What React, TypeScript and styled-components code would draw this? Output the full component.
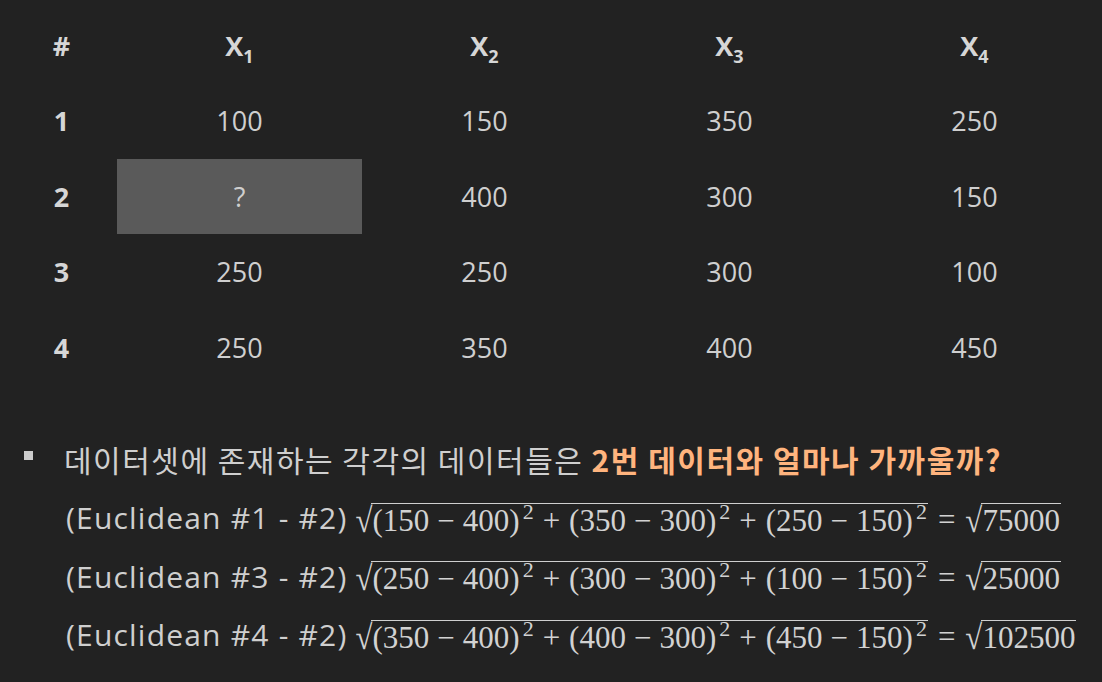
import styled, { createGlobalStyle } from 'styled-components'

const GlobalStyle = createGlobalStyle`
  html, body {
    margin: 0;
    background: #222222;
  }
  body {
    font-family: "Open Sans", "Noto Sans", "Noto Sans CJK KR", sans-serif;
    color: #cfcfcf;
  }
`

const Page = styled.div`
  width: 1102px;
  height: 682px;
  padding: 8px 0 0 6px;
  box-sizing: border-box;
  overflow: hidden;
`

const Table = styled.table`
  border-collapse: collapse;
  table-layout: fixed;
  width: 1091px;
`

const Cell = styled.td<{ $hl?: boolean }>`
  height: 75.5px;
  padding: 0;
  text-align: center;
  font-size: 27px;
  color: #cfcfcf;
  background: ${(p) => (p.$hl ? '#5a5a5a' : 'transparent')};
`

const Head = styled.th`
  height: 75px;
  padding: 0;
  text-align: center;
  font-size: 27px;
  font-weight: 700;
  color: #d6d6d6;
`

const RowHead = styled(Cell).attrs({ as: 'th' })`
  font-weight: 700;
  color: #d6d6d6;
`

const Sub = styled.sub`
  font-size: 18px;
  vertical-align: -7px;
  line-height: 0;
`

const List = styled.ul`
  list-style: none;
  margin: 45px 0 0 0;
  padding: 0 0 0 18px;
`

const Item = styled.li`
  display: flex;
  gap: 31px;
`

const Bullet = styled.span`
  flex: none;
  width: 9px;
  height: 9px;
  margin-top: 21px;
  background: #cccccc;
`

const Lines = styled.div`
  display: flex;
  flex-direction: column;
`

const Line = styled.div`
  height: 58.5px;
  display: flex;
  align-items: center;
  gap: 8px;
  white-space: nowrap;
`

const Question = styled.span`
  font-family: "Noto Sans CJK KR", "Noto Sans", sans-serif;
  font-size: 30px;
  letter-spacing: 1.5px;
`

const Label = styled.span`
  font-family: "Open Sans", "Noto Sans", sans-serif;
  font-size: 30px;
  letter-spacing: 1.2px;
  margin-left: 2px;
`

const Strong = styled.strong`
  color: #ffb47e;
  font-weight: 700;
`

const Math = styled.span`
  font-family: "Liberation Serif", "DejaVu Serif", serif;
  font-size: 31px;
  display: inline-flex;
  align-items: flex-end;
  color: #d2d2d2;
  margin-top: 4px;
`

const Radical = styled.span`
  font-size: 31px;
  line-height: 1;
  transform: scaleY(1.12);
  transform-origin: bottom;
  margin-right: -1px;
`

const Radicand = styled.span`
  border-top: 1.5px solid #cfcfcf;
  padding: 0 1px 0 1px;
  line-height: 34px;
`

const Sup = styled.sup`
  font-size: 22px;
  line-height: 0;
  vertical-align: 12px;
  margin-left: 3px;
`

const Op = styled.span<{ $wide?: boolean }>`
  padding: 0 ${(p) => (p.$wide ? 9 : 8)}px;
`

const Eq = styled.span`
  margin: 0 10px;
`

type Row = { id: number; vals: (number | '?')[] }

const rows: Row[] = [
  { id: 1, vals: [100, 150, 350, 250] },
  { id: 2, vals: ['?', 400, 300, 150] },
  { id: 3, vals: [250, 250, 300, 100] },
  { id: 4, vals: [250, 350, 400, 450] },
]

const formulas = [
  { a: 1, terms: [['150', '400'], ['350', '300'], ['250', '150']], result: '75000' },
  { a: 3, terms: [['250', '400'], ['300', '300'], ['100', '150']], result: '25000' },
  { a: 4, terms: [['350', '400'], ['400', '300'], ['450', '150']], result: '102500' },
]

function Formula ({ terms, result }: { terms: string[][]; result: string }) {
  return (
    <Math>
      <Radical>√</Radical>
      <Radicand>
        {terms.map(([x, y], i) => (
          <span key={i}>
            {i > 0 && <Op $wide>+</Op>}({x}<Op>−</Op>{y})<Sup>2</Sup>
          </span>
        ))}
      </Radicand>
      <Eq>=</Eq>
      <Radical>√</Radical>
      <Radicand>{result}</Radicand>
    </Math>
  )
}

export default function App () {
  return (
    <Page>
      <GlobalStyle />
      <Table>
        <colgroup>
          <col style={{ width: 111 }} />
          <col style={{ width: 245 }} />
          <col style={{ width: 245 }} />
          <col style={{ width: 245 }} />
          <col style={{ width: 245 }} />
        </colgroup>
        <thead>
          <tr>
            <Head>#</Head>
            {[1, 2, 3, 4].map((n) => (
              <Head key={n}>X<Sub>{n}</Sub></Head>
            ))}
          </tr>
        </thead>
        <tbody>
          {rows.map((r) => (
            <tr key={r.id}>
              <RowHead>{r.id}</RowHead>
              {r.vals.map((v, i) => (
                <Cell key={i} $hl={v === '?'}>{v}</Cell>
              ))}
            </tr>
          ))}
        </tbody>
      </Table>
      <List>
        <Item>
          <Bullet />
          <Lines>
            <Line>
              <Question>
                데이터셋에 존재하는 각각의 데이터들은 <Strong>2번 데이터와 얼마나 가까울까?</Strong>
              </Question>
            </Line>
            {formulas.map((f) => (
              <Line key={f.a}>
                <Label>(Euclidean #{f.a} - #2)</Label>
                <Formula terms={f.terms} result={f.result} />
              </Line>
            ))}
          </Lines>
        </Item>
      </List>
    </Page>
  )
}
